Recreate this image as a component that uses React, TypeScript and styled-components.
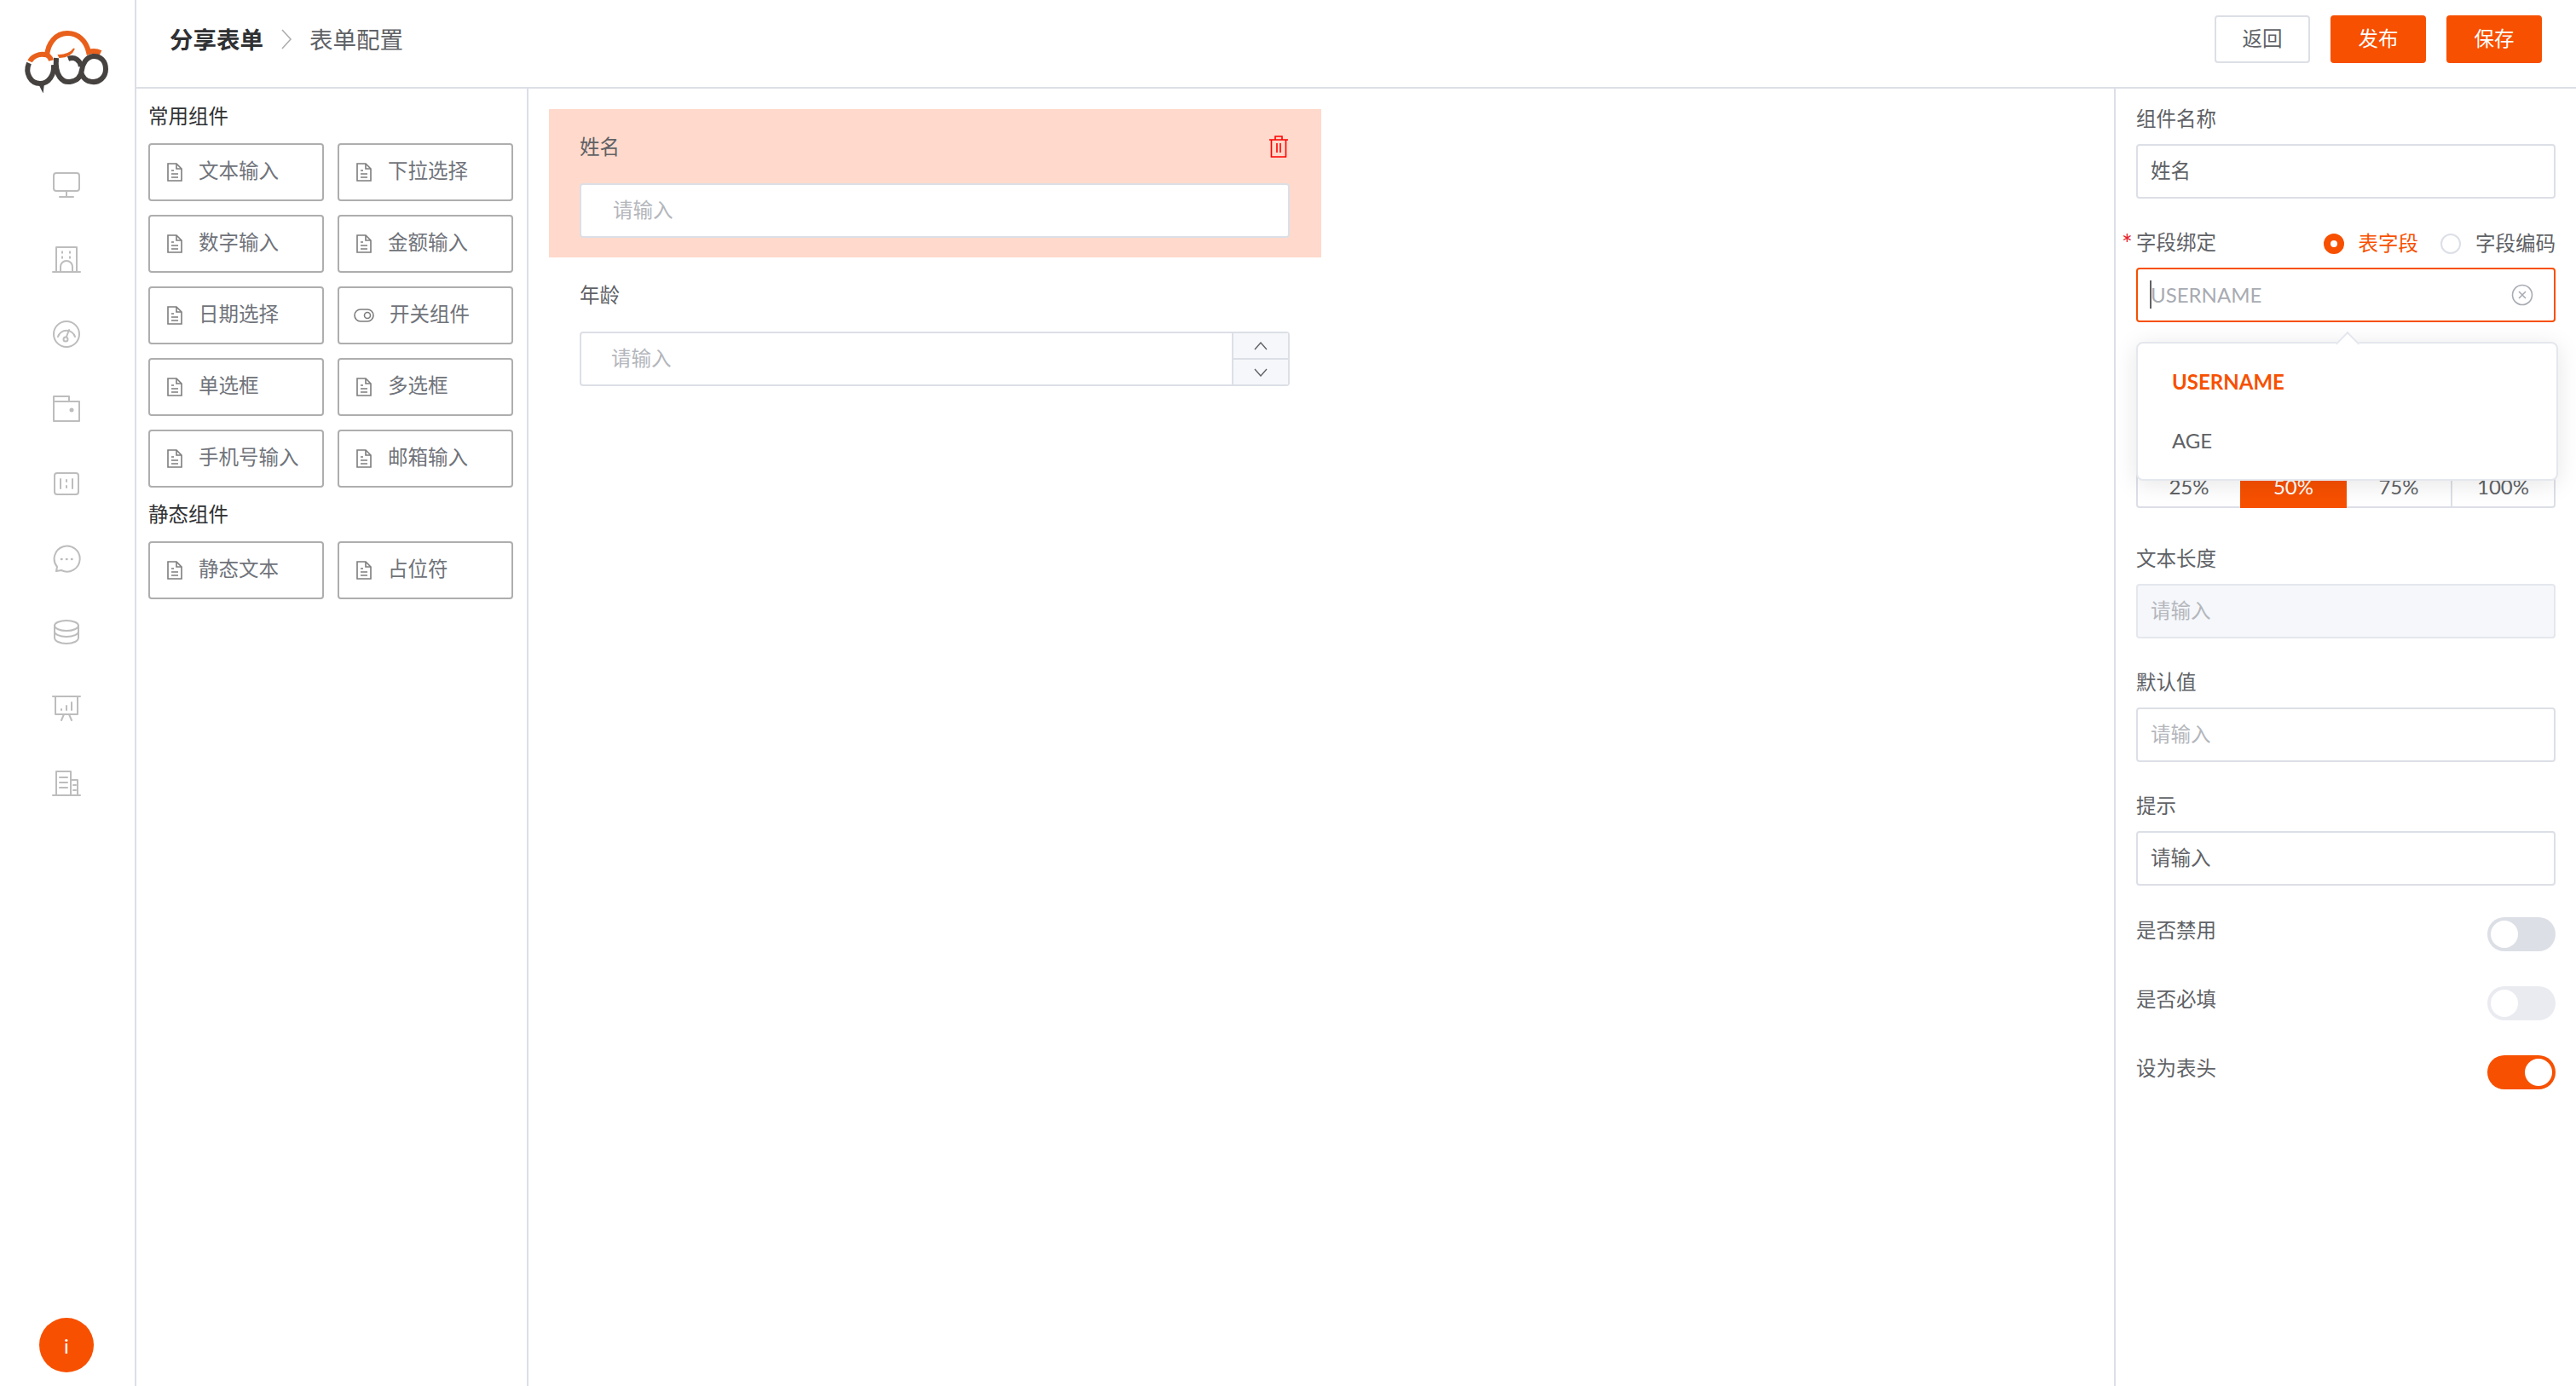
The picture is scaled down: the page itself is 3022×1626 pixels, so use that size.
import React from 'react'
import styled, { createGlobalStyle } from 'styled-components'

const ORANGE = '#f75000'
const LINE = '#dcdfe6'
const TEXT = '#606266'
const ICON = '#bdbdbd'

const GlobalStyle = createGlobalStyle`
  html, body {
    margin: 0;
    padding: 0;
    background: #fff;
  }
  body {
    font-family: Lato, "Noto Sans CJK SC", sans-serif;
    font-size: 23.5px;
    color: ${TEXT};
  }
  * {
    box-sizing: border-box;
  }
`

const Page = styled.div`
  display: flex;
  width: 3022px;
  height: 1626px;
  overflow: hidden;
`

const Sidebar = styled.aside`
  display: flex;
  flex-direction: column;
  align-items: center;
  flex: 0 0 160px;
  padding-right: 2px;
  border-right: 2px solid ${LINE};
`

const Logo = styled.svg`
  display: block;
  flex: none;
`

const SideNav = styled.nav`
  display: flex;
  flex-direction: column;
  margin-top: 53px;
`

const SideItem = styled.div`
  display: flex;
  align-items: center;
  justify-content: center;
  width: 156px;
  height: 87.75px;
`

const Avatar = styled.div`
  display: flex;
  align-items: center;
  justify-content: center;
  width: 64px;
  height: 64px;
  margin-top: auto;
  margin-bottom: 16px;
  border-radius: 50%;
  background: ${ORANGE};
  color: #fff;
  font-size: 24px;
`

const Main = styled.div`
  display: flex;
  flex-direction: column;
  flex: 1;
  min-width: 0;
`

const Header = styled.header`
  display: flex;
  align-items: center;
  justify-content: space-between;
  flex: 0 0 104px;
  padding: 0 40px 10px 39px;
  border-bottom: 2px solid ${LINE};
`

const Crumbs = styled.div`
  display: flex;
  align-items: center;
  font-size: 27.5px;
`

const CrumbStrong = styled.span`
  padding-bottom: 3px;
  color: #303133;
  font-weight: 700;
`

const CrumbText = styled.span`
  padding-bottom: 3px;
`

const CrumbSeparator = styled.svg`
  margin: 0 20px;
`

const HeaderActions = styled.div`
  display: flex;
  gap: 24px;
`

const HeaderButton = styled.div<{ $primary?: boolean }>`
  display: flex;
  align-items: center;
  justify-content: center;
  width: 112px;
  height: 56px;
  padding-bottom: 4px;
  border: 2px solid ${({ $primary }) => ($primary ? ORANGE : LINE)};
  border-radius: 4px;
  background: ${({ $primary }) => ($primary ? ORANGE : '#fff')};
  color: ${({ $primary }) => ($primary ? '#fff' : TEXT)};
`

const Body = styled.div`
  display: flex;
  flex: 1;
  min-height: 0;
`

const Palette = styled.section`
  flex: 0 0 460px;
  padding: 16px 0 0 14px;
  border-right: 2px solid ${LINE};
`

const PaletteTitle = styled.div<{ $spaced?: boolean }>`
  height: 34px;
  margin-top: ${({ $spaced }) => ($spaced ? '15px' : '0')};
  margin-bottom: 14px;
  color: #303133;
  line-height: 32px;
`

const PaletteGrid = styled.div`
  display: grid;
  grid-template-columns: 206px 206px;
  gap: 16px;
`

const PaletteButton = styled.div`
  display: flex;
  align-items: center;
  gap: 19px;
  height: 68px;
  padding-left: 20px;
  border: 2px solid #aeaeae;
  border-radius: 4px;
  color: #70737a;
`

const PaletteLabel = styled.span`
  padding-bottom: 6px;
`

const PaletteIcon = styled.svg<{ $wide?: boolean }>`
  flex: none;
  margin: ${({ $wide }) => ($wide ? '0 -1px 0 -3px' : '0')};
`

const Canvas = styled.section`
  flex: 1;
  padding: 24px 0 0 24px;
`

const FormItem = styled.div<{ $active?: boolean }>`
  width: 906px;
  height: 174px;
  padding: 24px 37px 0 36px;
  background: ${({ $active }) => ($active ? '#ffd9cb' : 'transparent')};
`

const FormItemHead = styled.div`
  display: flex;
  align-items: center;
  justify-content: space-between;
  height: 40px;
  margin-bottom: 23px;
`

const HeadText = styled.span`
  padding-bottom: 3px;
`

const CanvasInput = styled.div`
  display: flex;
  align-items: center;
  height: 64px;
  padding: 0 0 5px 37px;
  border: 2px solid ${LINE};
  border-radius: 4px;
  background: #fff;
  color: #b4b6bc;
`

const NumberBox = styled.div`
  display: flex;
  height: 64px;
  border: 2px solid ${LINE};
  border-radius: 4px;
  background: #fff;
`

const NumberText = styled.div`
  display: flex;
  align-items: center;
  flex: 1;
  padding: 0 0 5px 35px;
  color: #b4b6bc;
`

const Stepper = styled.div`
  display: flex;
  flex-direction: column;
  flex: 0 0 66px;
  border-left: 2px solid ${LINE};
`

const StepButton = styled.div<{ $down?: boolean }>`
  display: flex;
  align-items: center;
  justify-content: center;
  flex: 1;
  background: #f5f7fa;
  border-top: ${({ $down }) => ($down ? `2px solid ${LINE}` : 'none')};
`

const Inspector = styled.section`
  position: relative;
  flex: 0 0 542px;
  padding: 19px 24px 0 24px;
  border-left: 2px solid ${LINE};
`

const Field = styled.div<{ $flush?: boolean; $last?: boolean }>`
  position: relative;
  margin-bottom: ${({ $flush, $last }) => ($flush ? '0' : $last ? '37px' : '35px')};
`

const FieldLabel = styled.div`
  position: relative;
  display: flex;
  align-items: center;
  justify-content: space-between;
  height: 34px;
  margin-bottom: 12px;
  padding-bottom: 5px;
`

const Star = styled.span`
  position: absolute;
  left: -17px;
  top: 0;
  color: #e6212a;
  font-size: 30px;
  line-height: 34px;
`

const RadioGroup = styled.div`
  display: flex;
  align-items: center;
  gap: 26px;
  padding-top: 3px;
`

const RadioOption = styled.div<{ $checked?: boolean }>`
  display: flex;
  align-items: center;
  gap: 17px;
  color: ${({ $checked }) => ($checked ? ORANGE : TEXT)};
`

const RadioDot = styled.span<{ $checked?: boolean }>`
  display: block;
  width: 24px;
  height: 24px;
  margin-top: 4px;
  border-radius: 50%;
  border: ${({ $checked }) => ($checked ? `8px solid ${ORANGE}` : `2px solid ${LINE}`)};
  background: #fff;
`

const TextBox = styled.div<{ $tone?: 'value' | 'placeholder' | 'disabled' | 'focus' }>`
  position: relative;
  display: flex;
  align-items: center;
  justify-content: space-between;
  height: 64px;
  padding: 0 24px ${({ $tone }) => ($tone === 'focus' ? '2px' : '5px')} 15px;
  border: 2px solid ${({ $tone }) => ($tone === 'focus' ? ORANGE : $tone === 'disabled' ? '#e4e7ed' : LINE)};
  border-radius: 4px;
  background: ${({ $tone }) => ($tone === 'disabled' ? '#f5f7fa' : '#fff')};
  color: ${({ $tone }) => ($tone === 'value' ? TEXT : $tone === 'focus' ? '#a8abb2' : '#b4b6bc')};
  font-size: ${({ $tone }) => ($tone === 'focus' ? '24px' : '23.5px')};
`

const Caret = styled.span`
  position: absolute;
  left: 14px;
  top: 13px;
  width: 2px;
  height: 33px;
  background: #606266;
`

const Dropdown = styled.div`
  position: absolute;
  left: 0;
  top: 133px;
  z-index: 5;
  width: 495px;
  height: 163px;
  padding-top: 10px;
  border: 2px solid #e4e7ed;
  border-radius: 8px;
  background: #fff;
  box-shadow: 0 4px 28px rgba(0, 0, 0, 0.1);

  &::before {
    content: '';
    position: absolute;
    left: 236px;
    top: -10px;
    width: 18px;
    height: 18px;
    border-top: 2px solid #e4e7ed;
    border-left: 2px solid #e4e7ed;
    background: #fff;
    transform: rotate(45deg);
  }
`

const DropdownItem = styled.div<{ $selected?: boolean }>`
  display: flex;
  align-items: center;
  height: 69px;
  padding-left: 40px;
  color: ${({ $selected }) => ($selected ? ORANGE : TEXT)};
  font-size: 24px;
  font-weight: ${({ $selected }) => ($selected ? 700 : 400)};
`

const Segments = styled.div`
  display: grid;
  grid-template-columns: 120px 125px 122px 1fr;
  height: 64px;
  margin-top: 154px;
  margin-bottom: 43px;
  padding: 0;
  border: 2px solid ${LINE};
  border-radius: 4px;
`

const Segment = styled.div<{ $active?: boolean; $divider?: boolean }>`
  display: flex;
  align-items: center;
  justify-content: center;
  margin: -2px 0;
  padding-top: 12px;
  border-left: ${({ $divider }) => ($divider ? `2px solid ${LINE}` : 'none')};
  background: ${({ $active }) => ($active ? ORANGE : 'transparent')};
  color: ${({ $active }) => ($active ? '#fff' : TEXT)};
  font-size: 24px;
`

const ToggleRow = styled.div`
  display: flex;
  align-items: flex-start;
  justify-content: space-between;
  height: 40px;
  margin-bottom: 41px;
  line-height: 30px;
`

const Toggle = styled.div<{ $on?: boolean; $muted?: boolean }>`
  display: flex;
  justify-content: ${({ $on }) => ($on ? 'flex-end' : 'flex-start')};
  width: 80px;
  height: 40px;
  padding: 4px;
  border-radius: 20px;
  background: ${({ $on, $muted }) => ($on ? ORANGE : $muted ? '#e9ebf0' : '#dcdfe6')};
`

const ToggleKnob = styled.span`
  display: block;
  width: 32px;
  height: 32px;
  border-radius: 50%;
  background: #fff;
`

const ClearGlyph = styled.svg`
  margin-top: 2px;
`

const LogoMark = () => (
  <Logo width="156" height="120" viewBox="0 0 156 120" fill="none">
    <path d="M35 72 C38 66 46 63 52 64 C56 64 59 67 60 71" stroke="#e8601c" strokeWidth="6" />
    <path d="M55 66 C56 50 66 39 79 39 C92 39 101 48 104 61 C110 59 114 60 118 62" stroke="#e8601c" strokeWidth="6" />
    <path d="M69 65 C76 65 84 62 87 57 C85 62 80 67 70 67 Z" fill="#e8601c" stroke="#e8601c" strokeWidth="2" />
    <path d="M34 74 C29 86 36 98 47 98 C57 98 64 88 63 76" stroke="#454240" strokeWidth="6" />
    <path d="M46 98 L50 106 L51 98" fill="#454240" stroke="#454240" strokeWidth="2" />
    <path d="M66 68 C64 90 74 97 82 96 C90 95 95 90 96 82 C97 75 101 67 109 66 C118 65 124 72 124 81 C124 91 116 97 108 96 C101 96 96 90 95 84" stroke="#454240" strokeWidth="6" />
    <path d="M80 69 C88 66 94 71 95 78" stroke="#454240" strokeWidth="6" />
  </Logo>
)

const Stroke = ({ children }: { children: React.ReactNode }) => (
  <svg width="34" height="34" viewBox="0 0 34 34" fill="none" stroke={ICON} strokeWidth="2" strokeLinecap="round" strokeLinejoin="round">
    {children}
  </svg>
)

const sideIcons = [
  <>
    <rect x="2" y="3" width="30" height="21" rx="3" />
    <path d="M17 24v6M9 31h16" />
  </>,
  <>
    <path d="M5 2h24v29H5zM1 31h32" />
    <path d="M11 8h2M20 8h2M11 14h2M20 14h2" strokeWidth="3" strokeLinecap="butt" />
    <path d="M10 31v-6a7 7 0 0 1 14 0v6" />
  </>,
  <>
    <circle cx="17" cy="17" r="15" />
    <path d="M7 20a10.500 10.500 0 0 1 20 0" />
    <path d="M20 12l-3 8" />
    <circle cx="16" cy="23" r="2.500" />
  </>,
  <>
    <path d="M2 8V2h18v6M2 8h30v23H2z" />
    <circle cx="23" cy="18" r="1.500" fill={ICON} />
  </>,
  <>
    <rect x="3" y="4" width="28" height="25" rx="3" />
    <path d="M10 11v11M24 11v11M17 12v2M17 19v2" />
  </>,
  <>
    <path d="M5 31l1-5A15 15 0 1 1 11 30z" />
    <path d="M11 17h.5M17 17h.5M23 17h.5" strokeWidth="2.5" />
  </>,
  <>
    <ellipse cx="17" cy="8" rx="14" ry="6" />
    <path d="M3 8v7c0 3 6 6 14 6s14-3 14-6V8" />
    <path d="M3 15v7c0 4 6 7 14 7s14-3 14-7v-7" />
  </>,
  <>
    <path d="M1 3h32M4 3v21h26V3M11 31l3-7M23 31l-3-7" />
    <path d="M11 18v1M17 14v5M23 10v9" />
  </>,
  <>
    <path d="M1 31h32M5 31V3h17v28M22 13h8v18" />
    <path d="M9 10h9M9 16h9M9 22h9M25 19h3M25 25h3" />
  </>,
]

const DocIcon = () => (
  <PaletteIcon width="18" height="22" viewBox="0 0 18 22" fill="none" stroke="#7d7d7d" strokeWidth="1.6">
    <path d="M1 1h10l6 6v14H1z" />
    <path d="M11 1v6h6M5 9h3M5 13h8M5 17h8" />
  </PaletteIcon>
)

const SwitchIcon = () => (
  <PaletteIcon $wide width="24" height="16" viewBox="0 0 24 16" fill="none" stroke="#7d7d7d" strokeWidth="1.6">
    <rect x="1" y="1" width="22" height="14" rx="7" />
    <circle cx="16" cy="8" r="3.500" />
  </PaletteIcon>
)

const TrashIcon = () => (
  <svg width="26" height="26" viewBox="0 0 26 26" fill="none" stroke="#ff0000" strokeWidth="1.6">
    <path d="M2 5h22M9 5V1h8v4M4.500 5v20h17V5M11 9v11M15 9v11" />
  </svg>
)

const Chevron = ({ up }: { up?: boolean }) => (
  <svg width="16" height="10" viewBox="0 0 16 10" fill="none" stroke="#606266" strokeWidth="1.4">
    <path d={up ? 'M1 9l7-8 7 8' : 'M1 1l7 8 7-8'} />
  </svg>
)

const ClearIcon = () => (
  <ClearGlyph width="26" height="26" viewBox="0 0 26 26" fill="none" stroke="#a8abb2" strokeWidth="1.6">
    <circle cx="13" cy="13" r="11.500" />
    <path d="M9 9l8 8M17 9l-8 8" />
  </ClearGlyph>
)

const commonParts = ['文本输入', '下拉选择', '数字输入', '金额输入', '日期选择', '开关组件', '单选框', '多选框', '手机号输入', '邮箱输入']
const staticParts = ['静态文本', '占位符']

const PartButton = ({ name }: { name: string }) => (
  <PaletteButton>
    {name === '开关组件' ? <SwitchIcon /> : <DocIcon />}
    <PaletteLabel>{name}</PaletteLabel>
  </PaletteButton>
)

export default function App() {
  return (
    <Page>
      <GlobalStyle />
      <Sidebar>
        <LogoMark />
        <SideNav>
          {sideIcons.map((icon, i) => (
            <SideItem key={i}>
              <Stroke>{icon}</Stroke>
            </SideItem>
          ))}
        </SideNav>
        <Avatar>i</Avatar>
      </Sidebar>
      <Main>
        <Header>
          <Crumbs>
            <CrumbStrong>分享表单</CrumbStrong>
            <CrumbSeparator width="14" height="26" viewBox="0 0 14 26" fill="none" stroke="#aeaeae" strokeWidth="1.6">
              <path d="M2 2l10 11L2 24" />
            </CrumbSeparator>
            <CrumbText>表单配置</CrumbText>
          </Crumbs>
          <HeaderActions>
            <HeaderButton>返回</HeaderButton>
            <HeaderButton $primary>发布</HeaderButton>
            <HeaderButton $primary>保存</HeaderButton>
          </HeaderActions>
        </Header>
        <Body>
          <Palette>
            <PaletteTitle>常用组件</PaletteTitle>
            <PaletteGrid>
              {commonParts.map(name => (
                <PartButton key={name} name={name} />
              ))}
            </PaletteGrid>
            <PaletteTitle $spaced>静态组件</PaletteTitle>
            <PaletteGrid>
              {staticParts.map(name => (
                <PartButton key={name} name={name} />
              ))}
            </PaletteGrid>
          </Palette>
          <Canvas>
            <FormItem $active>
              <FormItemHead>
                <HeadText>姓名</HeadText>
                <TrashIcon />
              </FormItemHead>
              <CanvasInput>请输入</CanvasInput>
            </FormItem>
            <FormItem>
              <FormItemHead>
                <HeadText>年龄</HeadText>
              </FormItemHead>
              <NumberBox>
                <NumberText>请输入</NumberText>
                <Stepper>
                  <StepButton>
                    <Chevron up />
                  </StepButton>
                  <StepButton $down>
                    <Chevron />
                  </StepButton>
                </Stepper>
              </NumberBox>
            </FormItem>
          </Canvas>
          <Inspector>
            <Field>
              <FieldLabel>组件名称</FieldLabel>
              <TextBox $tone="value">姓名</TextBox>
            </Field>
            <Field $flush>
              <FieldLabel>
                <Star>*</Star>
                <span>字段绑定</span>
                <RadioGroup>
                  <RadioOption $checked>
                    <RadioDot $checked />
                    表字段
                  </RadioOption>
                  <RadioOption>
                    <RadioDot />
                    字段编码
                  </RadioOption>
                </RadioGroup>
              </FieldLabel>
              <TextBox $tone="focus">
                <Caret />
                USERNAME
                <ClearIcon />
              </TextBox>
              <Dropdown>
                <DropdownItem $selected>USERNAME</DropdownItem>
                <DropdownItem>AGE</DropdownItem>
              </Dropdown>
            </Field>
            <Segments>
              <Segment>25%</Segment>
              <Segment $active>50%</Segment>
              <Segment>75%</Segment>
              <Segment $divider>100%</Segment>
            </Segments>
            <Field>
              <FieldLabel>文本长度</FieldLabel>
              <TextBox $tone="disabled">请输入</TextBox>
            </Field>
            <Field>
              <FieldLabel>默认值</FieldLabel>
              <TextBox $tone="placeholder">请输入</TextBox>
            </Field>
            <Field $last>
              <FieldLabel>提示</FieldLabel>
              <TextBox $tone="value">请输入</TextBox>
            </Field>
            <ToggleRow>
              <span>是否禁用</span>
              <Toggle>
                <ToggleKnob />
              </Toggle>
            </ToggleRow>
            <ToggleRow>
              <span>是否必填</span>
              <Toggle $muted>
                <ToggleKnob />
              </Toggle>
            </ToggleRow>
            <ToggleRow>
              <span>设为表头</span>
              <Toggle $on>
                <ToggleKnob />
              </Toggle>
            </ToggleRow>
          </Inspector>
        </Body>
      </Main>
    </Page>
  )
}
